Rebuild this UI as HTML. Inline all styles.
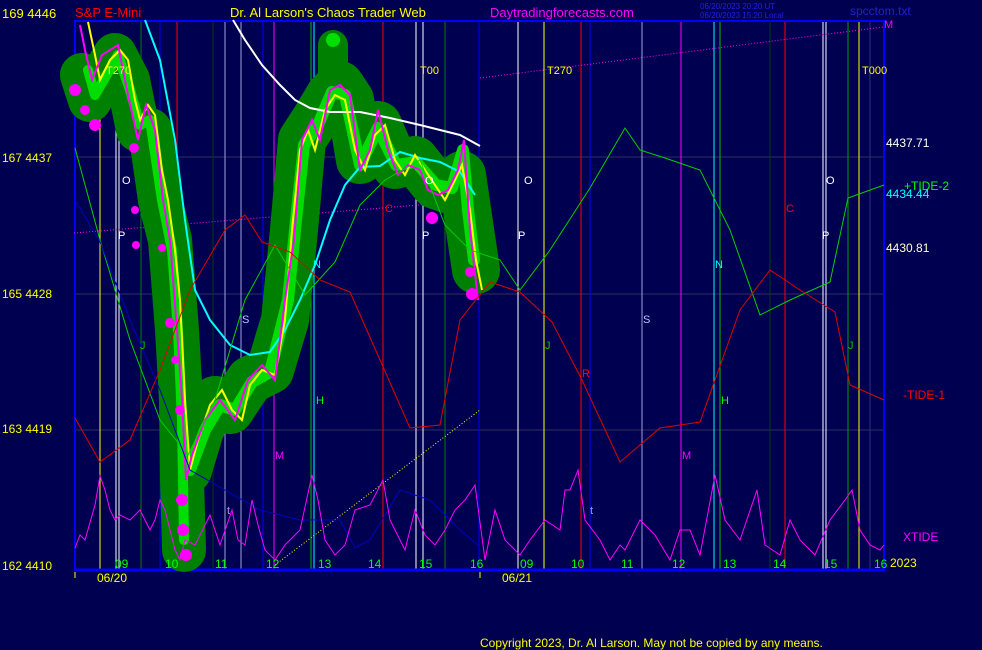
<!DOCTYPE html>
<html><head><meta charset="utf-8"><style>
html,body{margin:0;padding:0;background:#000050;}
svg{display:block;font-family:"Liberation Sans",sans-serif;}
</style></head><body>
<svg width="982" height="650" viewBox="0 0 982 650" xmlns="http://www.w3.org/2000/svg">
<rect width="982" height="650" fill="#000050"/>
<g font-size="13">
<text x="2" y="18" fill="#ffff00">169  4446</text>
<text x="75" y="17" fill="#ff0000">S&amp;P E-Mini</text>
<text x="230" y="17" fill="#ffff00">Dr. Al Larson's Chaos Trader Web</text>
<text x="490" y="17" fill="#ff00ff">Daytradingforecasts.com</text>
<text x="850" y="15" fill="#2020d0" font-size="12">spcctom.txt</text>
</g>
<text x="700" y="9" fill="#2020e0" font-size="8">06/20/2023 20:20 UT</text>
<text x="700" y="18" fill="#2020e0" font-size="8">06/20/2023 15:20 Local</text>
<g font-size="12" fill="#ffff00">
<text x="2" y="162">167  4437</text>
<text x="2" y="298">165  4428</text>
<text x="2" y="433">163  4419</text>
<text x="2" y="570">162  4410</text>
</g>
<g stroke="#303060" stroke-width="1">
<line x1="74" y1="157" x2="884" y2="157"/><line x1="74" y1="294" x2="884" y2="294"/><line x1="74" y1="430" x2="884" y2="430"/>
</g>
<g stroke-width="1">
<line x1="100" y1="40" x2="100" y2="570" stroke="#ffff00"/>
<line x1="116" y1="40" x2="116" y2="570" stroke="#ffffff"/>
<line x1="119" y1="40" x2="119" y2="570" stroke="#ffffff"/>
<line x1="141" y1="20" x2="141" y2="570" stroke="#008000"/>
<line x1="160" y1="20" x2="160" y2="570" stroke="#0000ff"/>
<line x1="177" y1="20" x2="177" y2="570" stroke="#ff0000"/>
<line x1="213" y1="20" x2="213" y2="570" stroke="#004000"/>
<line x1="225" y1="20" x2="225" y2="570" stroke="#a0a0e0"/>
<line x1="241" y1="20" x2="241" y2="570" stroke="#a0a0e0"/>
<line x1="263" y1="20" x2="263" y2="570" stroke="#0000ff"/>
<line x1="274" y1="20" x2="274" y2="570" stroke="#ff00ff"/>
<line x1="311" y1="20" x2="311" y2="570" stroke="#00c000"/>
<line x1="314" y1="20" x2="314" y2="570" stroke="#00ffff"/>
<line x1="383" y1="20" x2="383" y2="570" stroke="#ff0000"/>
<line x1="416" y1="20" x2="416" y2="570" stroke="#ffffff"/>
<line x1="423" y1="20" x2="423" y2="570" stroke="#ffffff"/>
<line x1="445" y1="20" x2="445" y2="570" stroke="#008000"/>
<line x1="479" y1="20" x2="479" y2="570" stroke="#0000ff"/>
<line x1="518" y1="20" x2="518" y2="570" stroke="#ffffff"/>
<line x1="544" y1="20" x2="544" y2="570" stroke="#ffff00"/>
<line x1="581" y1="20" x2="581" y2="570" stroke="#ff0000"/>
<line x1="590" y1="20" x2="590" y2="570" stroke="#0000ff"/>
<line x1="642" y1="20" x2="642" y2="570" stroke="#a0a0e0"/>
<line x1="681" y1="20" x2="681" y2="570" stroke="#ff00ff"/>
<line x1="714" y1="20" x2="714" y2="570" stroke="#00ffff"/>
<line x1="720" y1="20" x2="720" y2="570" stroke="#00c000"/>
<line x1="770" y1="20" x2="770" y2="570" stroke="#004000"/>
<line x1="785" y1="20" x2="785" y2="570" stroke="#ff0000"/>
<line x1="823" y1="20" x2="823" y2="570" stroke="#ffffff"/>
<line x1="826" y1="20" x2="826" y2="570" stroke="#ffffff"/>
<line x1="848" y1="20" x2="848" y2="570" stroke="#00a000"/>
<line x1="859" y1="20" x2="859" y2="570" stroke="#ffff00"/>
<line x1="870" y1="20" x2="870" y2="570" stroke="#303080"/>
</g>
<rect x="75" y="21" width="809" height="549" fill="none" stroke="#0000ff" stroke-width="2"/>
<line x1="74" y1="570" x2="885" y2="570" stroke="#0000ff" stroke-width="3"/>
<line x1="74" y1="233" x2="480" y2="200" stroke="#ff00ff" stroke-dasharray="1,2"/>
<line x1="480" y1="78" x2="884" y2="27" stroke="#ff00ff" stroke-dasharray="1,2"/>
<line x1="275" y1="565" x2="480" y2="410" stroke="#ffff00" stroke-dasharray="1,2"/>
<g fill="none" stroke-linejoin="round" stroke-linecap="round">
<polyline stroke="#008000" stroke-width="44" points="82,75 90,100 100,80 115,55 128,80 138,130 150,130 160,200 170,240 177,330 181,400 182,480 184,550"/>
<polyline stroke="#008000" stroke-width="48" points="188,470 200,430 215,400 230,410 250,380 270,370 285,320 294,230 302,140 315,120 330,95 340,85 350,100 360,160 378,125 395,165 415,160 435,185 450,190 462,175 470,230 476,270"/>
<polyline stroke="#008000" stroke-width="30" points="333,45 333,80"/>
<polyline stroke="#00dd00" stroke-width="10" points="88,70 95,95 118,55 130,90 140,125 150,120 162,200 172,250 178,330 182,420 184,540"/>
<polyline stroke="#00dd00" stroke-width="12" points="190,470 205,430 220,405 235,410 252,382 270,372 288,300 296,220 304,145 318,125 332,92 345,95 360,165 378,128 396,165 416,162 436,185 452,188 463,150 468,210 474,260"/>
<circle cx="333" cy="40" r="7" fill="#00e000" stroke="none"/>
</g>
<g fill="#ff00ff">
<circle cx="75" cy="90" r="6"/><circle cx="85" cy="110" r="5"/><circle cx="95" cy="125" r="6"/>
<circle cx="134" cy="148" r="5"/><circle cx="135" cy="210" r="4"/><circle cx="136" cy="245" r="4"/>
<circle cx="162" cy="248" r="4"/><circle cx="170" cy="323" r="5"/><circle cx="175" cy="360" r="4"/>
<circle cx="180" cy="410" r="5"/><circle cx="182" cy="500" r="6"/><circle cx="183" cy="530" r="6"/>
<circle cx="186" cy="555" r="6"/><circle cx="432" cy="218" r="6"/><circle cx="470" cy="272" r="5"/><circle cx="472" cy="294" r="6"/>
</g>
<polyline fill="none" stroke="#ffffff" stroke-width="2" points="233,20 245,40 262,65 280,85 295,100 310,108 330,112 360,112 390,118 420,125 440,130 460,135 480,146"/>
<polyline fill="none" stroke="#00ffff" stroke-width="2" points="145,20 160,60 175,140 185,220 195,290 210,320 230,345 250,355 270,352 285,330 300,300 315,265 330,220 345,185 360,167 380,166 400,152 420,158 440,162 460,172 475,195"/>
<polyline fill="none" stroke="#ffff00" stroke-width="2" points="88,22 95,55 100,80 110,60 120,50 128,60 135,100 140,120 148,105 155,115 162,170 168,200 175,250 180,300 185,400 190,470 198,440 210,405 222,390 232,410 242,420 250,385 262,370 275,375 285,320 292,230 300,150 308,130 315,150 325,110 335,95 345,100 355,150 365,170 375,135 385,125 395,160 405,175 415,155 425,170 435,185 445,200 455,180 462,165 470,210 476,260 482,290"/>
<polyline fill="none" stroke="#ff00ff" stroke-width="2" points="80,25 85,50 92,80 102,55 118,45 128,95 138,140 146,105 155,130 163,200 170,240 177,330 182,400 186,480 192,455 205,420 220,400 235,420 248,380 262,365 275,380 285,300 294,240 302,140 312,120 320,140 330,90 340,85 350,95 360,170 370,150 378,110 388,150 398,175 408,165 420,170 428,190 438,195 448,190 458,170 464,140 470,230 478,300"/>
<polyline fill="none" stroke="#00d000" points="75,148 100,240 130,340 160,420 188,455 215,400 245,300 275,245 305,295 335,262 360,205 385,180 420,160 445,225 470,250 500,260 520,290 550,250 590,188 625,128 640,150 665,158 700,170 730,230 760,315 790,300 830,282 848,198 884,185"/>
<polyline fill="none" stroke="#e00000" points="75,418 100,462 130,440 160,370 190,290 225,230 245,215 262,242 290,252 320,280 350,292 380,360 410,428 440,425 460,320 490,282 520,292 552,322 582,380 620,462 660,428 700,422 740,310 770,270 800,290 835,312 850,385 884,400"/>
<polyline fill="none" stroke="#0000c0" points="75,200 100,242 130,320 160,390 190,470 260,510 300,520 340,520 355,548 370,540 400,490 430,500 460,530 478,545"/>
<polyline fill="none" stroke="#ff00ff" stroke-width="1" points="75,548 80,535 85,540 95,505 100,476 105,490 110,510 115,520 120,515 130,520 140,510 150,530 155,520 160,500 165,510 170,530 175,550 180,560 185,540 195,545 210,515 220,545 232,510 238,540 245,545 252,500 258,525 265,550 275,560 285,545 300,530 312,475 318,500 325,540 335,555 345,545 355,510 370,505 383,480 390,520 400,540 405,550 415,510 425,535 435,545 445,530 455,510 465,500 475,485 485,560 495,510 505,540 520,555 530,540 545,520 560,530 565,490 570,490 578,470 585,520 600,540 610,560 620,545 625,550 640,520 655,535 670,560 680,530 690,530 700,555 715,475 725,520 740,540 757,490 765,545 780,555 790,520 800,540 815,555 830,520 845,500 852,490 860,530 870,545 880,550 884,545"/>
<g font-size="11">
<text x="106" y="74" fill="#ffff00">T270</text><text x="420" y="74" fill="#ffff00">T00</text>
<text x="547" y="74" fill="#ffff00">T270</text><text x="862" y="74" fill="#ffff00">T000</text>
<text x="884" y="28" fill="#ff00ff">M</text>
<text x="122" y="184" fill="#ffffff">O</text><text x="524" y="184" fill="#ffffff">O</text><text x="826" y="184" fill="#ffffff">O</text><text x="425" y="184" fill="#ffffff">O</text>
<text x="118" y="239" fill="#ffffff">P</text><text x="422" y="239" fill="#ffffff">P</text><text x="518" y="239" fill="#ffffff">P</text><text x="822" y="239" fill="#ffffff">P</text>
<text x="385" y="212" fill="#ff0000">C</text><text x="786" y="212" fill="#ff0000">C</text>
<text x="242" y="323" fill="#c0c0ff">S</text><text x="643" y="323" fill="#c0c0ff">S</text>
<text x="313" y="268" fill="#00ffff">N</text><text x="715" y="268" fill="#00ffff">N</text>
<text x="316" y="404" fill="#00ff00">H</text><text x="721" y="404" fill="#00ff00">H</text>
<text x="140" y="349" fill="#00c000">J</text><text x="545" y="349" fill="#00c000">J</text><text x="848" y="349" fill="#00c000">J</text>
<text x="275" y="459" fill="#ff00ff">M</text><text x="682" y="459" fill="#ff00ff">M</text>
<text x="582" y="377" fill="#ff0000">R</text>
<text x="227" y="514" fill="#a0a0e0">t</text><text x="590" y="514" fill="#a0a0e0">t</text>
</g>
<g font-size="12">
<text x="886" y="147" fill="#ffffff">4437.71</text>
<text x="904" y="190" fill="#00ff00">+TIDE-2</text>
<text x="886" y="198" fill="#00ffff">4434.44</text>
<text x="886" y="252" fill="#ffffcc">4430.81</text>
<text x="903" y="399" fill="#ff0000">-TIDE-1</text>
<text x="903" y="541" fill="#ff00ff">XTIDE</text>
<text x="890" y="567" fill="#ffff00">2023</text>
</g>
<g font-size="12" fill="#00ff00">
<text x="115" y="568">09</text><text x="165" y="568">10</text><text x="215" y="568">11</text><text x="266" y="568">12</text>
<text x="318" y="568">13</text><text x="368" y="568">14</text><text x="419" y="568">15</text><text x="470" y="568">16</text>
<text x="520" y="568">09</text><text x="571" y="568">10</text><text x="621" y="568">11</text><text x="672" y="568">12</text>
<text x="723" y="568">13</text><text x="773" y="568">14</text><text x="824" y="568">15</text><text x="874" y="568">16</text>
</g>
<g font-size="12" fill="#ffff00">
<line x1="75" y1="572" x2="75" y2="578" stroke="#ffff00"/><line x1="480" y1="572" x2="480" y2="578" stroke="#ffff00"/>
<text x="97" y="582">06/20</text><text x="502" y="582">06/21</text>
<text x="480" y="647">Copyright 2023, Dr. Al Larson. May not be copied by any means.</text>
</g>
</svg>
</body></html>
